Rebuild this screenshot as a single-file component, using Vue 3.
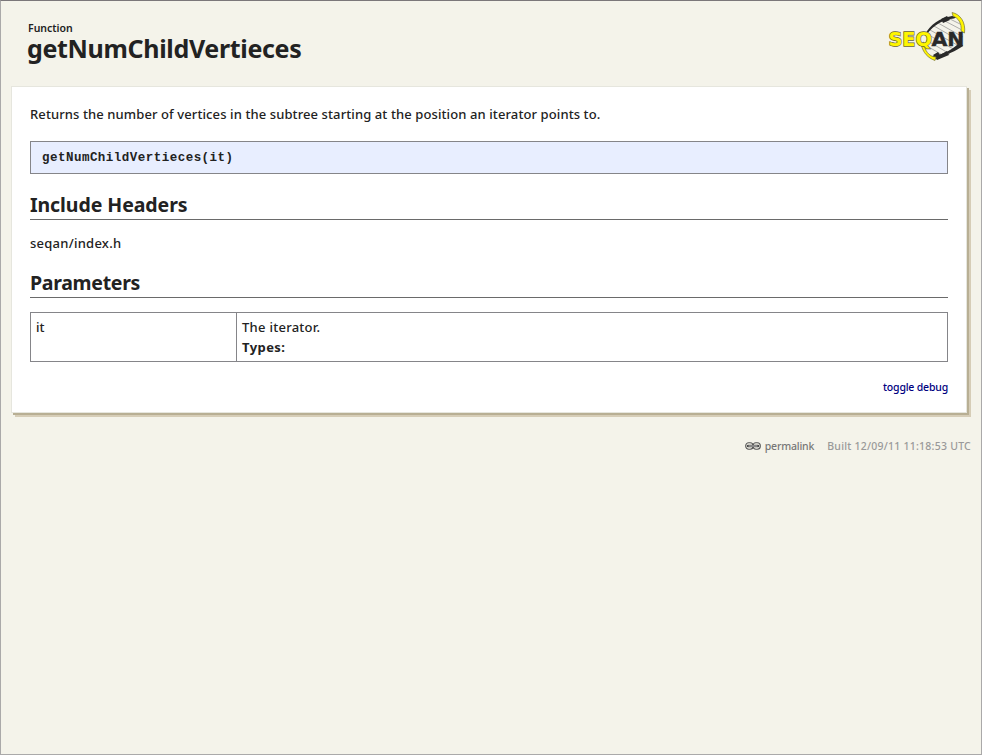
<script setup>
const title = 'getNumChildVertieces'
const params = [{ name: 'it', text: 'The iterator.' }]
</script>

<template>
  <div class="page">
    <header class="head">
      <div class="titles">
        <div class="kind">Function</div>
        <h1>{{ title }}</h1>
      </div>
      <svg class="logo" width="80" height="52" viewBox="0 0 80 52">
        <path d="M40 24C46 13 58 7 68 7C77 14 77 25 73 33C67 41 57 47 48 47C38 40 37 31 40 24Z" fill="#f4f3ea" />
        <g stroke="#8d8d8d" stroke-width=".7" fill="none">
          <path d="M56 10L75 20M51 13L76 27M47 16L75 32M43 20L72 36M40 24L68 40M39 30L63 44M40 36L57 46M61 8L75 15" />
        </g>
        <path d="M38 25C43 14 53 8 65 6L70 7L67 8.5C57 9 47 15 40 24Z" fill="#292929" />
        <path d="M73 32L76 36C69 41 60 45 48 48L45 46.5C57 44 67 39 73 32Z" fill="#292929" />
        <path d="M54 9L60 6L63 10L56 13ZM46 45L51 42L53 45L60 41L62 45L50 50Z" fill="#292929" />
        <path d="M65 2.5C73 4 79 12 77.5 23L74 21C75 13 71 8 66 6Z" fill="#fff500" stroke="#77733a" stroke-width=".7" />
        <path d="M37 32C37 40 42 47 49 47L48 50.5C41 48 36 43 34 34Z" fill="#fff500" stroke="#77733a" stroke-width=".7" />
        <text class="seq" x="1.4" y="36.3" textLength="43.5" lengthAdjust="spacingAndGlyphs">SEQ</text>
        <text class="an" x="44.5" y="36.3" textLength="33" lengthAdjust="spacingAndGlyphs">AN</text>
      </svg>
    </header>

    <main class="card">
      <p class="summary">Returns the number of vertices in the subtree starting at the position an iterator points to.</p>
      <pre class="signature">{{ title }}(it)</pre>
      <h2>Include Headers</h2>
      <p class="file">seqan/index.h</p>
      <h2 class="par">Parameters</h2>
      <div class="params">
        <div v-for="p in params" :key="p.name" class="row">
          <div class="name">{{ p.name }}</div>
          <div class="desc">
            <div>{{ p.text }}</div>
            <b>Types:</b>
          </div>
        </div>
      </div>
      <div class="debug"><a>toggle debug</a></div>
    </main>

    <footer class="foot">
      <svg width="16" height="8" viewBox="0 0 16 8" fill="none">
        <rect x=".7" y=".8" width="7.4" height="6.4" rx="3" stroke="#555" stroke-width="1.1" />
        <rect x="7.9" y=".8" width="7.4" height="6.4" rx="3" stroke="#555" stroke-width="1.1" />
        <path d="M3 4H13" stroke="#444" stroke-width="2.4" stroke-linecap="round" />
        <path d="M3.5 4H12.5" stroke="#ddd" stroke-width=".9" />
      </svg>
      <a class="perma">permalink</a>
      <span class="built">Built 12/09/11 11:18:53 UTC</span>
    </footer>
  </div>
</template>

<style>
body {
  margin: 0;
  background: #f4f3ea;
}
</style>

<style scoped>
.page {
  box-sizing: border-box;
  height: 755px;
  border: 1px solid #aaa9a9;
  border-top-color: #7b777a;
  background: #f4f3ea;
  font-family: "Noto Sans", sans-serif;
  font-size: 13px;
  font-weight: 500;
  line-height: 20px;
  color: #222;
  overflow: hidden;
}
.head {
  display: flex;
  justify-content: space-between;
  height: 85px;
  padding: 0 15px 0 26px;
  box-sizing: border-box;
}
.titles {
  padding-top: 20px;
}
.kind {
  padding-left: 1px;
  font-size: 10.5px;
  font-weight: 600;
  line-height: 14px;
}
h1 {
  margin: 0;
  font-size: 25px;
  font-weight: 700;
  line-height: 27px;
  letter-spacing: -0.33px;
}
.logo {
  margin-top: 9px;
  margin-right: -1px;
}
.seq,
.an {
  font: 700 20px "DejaVu Sans", sans-serif;
}
.seq {
  fill: #fff500;
  stroke: #66622c;
  stroke-width: 1.3px;
  paint-order: stroke;
}
.an {
  fill: #292929;
  stroke: #292929;
  stroke-width: 0.4px;
}
.card {
  box-sizing: border-box;
  width: 956px;
  height: 327px;
  margin-left: 10px;
  padding: 17px 18px 0;
  border: 1px solid #e6e6de;
  background: #fff;
  box-shadow: 2px 2px #b8af94, 4px 4px #d6cdb7;
}
p {
  margin: 0;
}
.summary {
  letter-spacing: 0.1px;
}
.signature {
  box-sizing: border-box;
  height: 33px;
  margin: 17px 0 0;
  padding: 1px 11px 0;
  border: 1px solid #858589;
  background: #e8eeff;
  font: 700 12.5px/31px "Liberation Mono", monospace;
  letter-spacing: 0.48px;
}
h2 {
  box-sizing: border-box;
  height: 30px;
  margin: 16px 0 0;
  border-bottom: 1px solid #6a6a6a;
  font-size: 19.5px;
  font-weight: 700;
  line-height: 30px;
  letter-spacing: -0.07px;
}
.file {
  padding-top: 13px;
  letter-spacing: 0.25px;
}
.par {
  margin-top: 15px;
  letter-spacing: -0.3px;
}
.params {
  margin-top: 14px;
  border: 1px solid #858589;
}
.row {
  display: flex;
  height: 48px;
}
.name {
  box-sizing: border-box;
  width: 206px;
  padding: 4px 5px;
  border-right: 1px solid #858589;
}
.desc {
  padding: 4px 5px;
  letter-spacing: 0.27px;
}
.desc b {
  letter-spacing: 0.42px;
}
.debug {
  margin-top: 15px;
  text-align: right;
  font-size: 10.5px;
  letter-spacing: -0.18px;
  color: #000080;
}
.foot {
  display: flex;
  align-items: center;
  justify-content: flex-end;
  margin: 23px 10px 0 0;
  font-size: 10.5px;
  color: #999;
}
.perma {
  margin-left: 4px;
  letter-spacing: -0.18px;
  color: #777;
}
.built {
  margin-left: 13px;
  letter-spacing: 0.24px;
}
</style>
